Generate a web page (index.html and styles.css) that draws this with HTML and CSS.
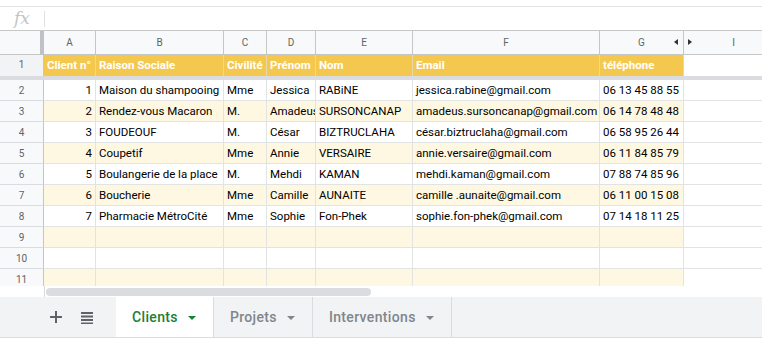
FILE: index.html
```html
<!DOCTYPE html>
<html lang="fr">
<head>
  <meta charset="UTF-8" />
  <title>Clients</title>
  <link rel="stylesheet" href="styles.css">
</head>
<body>
  <div class="app">
    <div class="formula-bar">
      <span class="fx">fx</span>
      <span class="fx-sep"></span>
    </div>

    <div class="sheet">
      <div class="row col-head">
        <div class="corner"></div>
        <div>A</div><div>B</div><div>C</div><div>D</div><div>E</div><div>F</div>
        <div class="hide-left">G</div>
        <div class="hide-right">I</div>
      </div>

      <div class="row head-row">
        <div class="rn rn-frozen">1</div>
        <div>Client n°</div>
        <div>Raison Sociale</div>
        <div>Civilité</div>
        <div>Prénom</div>
        <div>Nom</div>
        <div>Email</div>
        <div>téléphone</div>
        <div class="blank"></div>
      </div>

      <div class="freeze"></div>

      <div class="body">
        <div class="row">
          <div class="rn">2</div><div class="num">1</div><div>Maison du shampooing</div><div>Mme</div><div>Jessica</div><div>RABiNE</div><div>jessica.rabine@gmail.com</div><div>06 13 45 88 55</div><div class="blank"></div>
        </div>
        <div class="row band">
          <div class="rn">3</div><div class="num">2</div><div>Rendez-vous Macaron</div><div>M.</div><div>Amadeus</div><div>SURSONCANAP</div><div>amadeus.sursoncanap@gmail.com</div><div>06 14 78 48 48</div><div class="blank"></div>
        </div>
        <div class="row">
          <div class="rn">4</div><div class="num">3</div><div>FOUDEOUF</div><div>M.</div><div>César</div><div>BIZTRUCLAHA</div><div>césar.biztruclaha@gmail.com</div><div>06 58 95 26 44</div><div class="blank"></div>
        </div>
        <div class="row band">
          <div class="rn">5</div><div class="num">4</div><div>Coupetif</div><div>Mme</div><div>Annie</div><div>VERSAIRE</div><div>annie.versaire@gmail.com</div><div>06 11 84 85 79</div><div class="blank"></div>
        </div>
        <div class="row">
          <div class="rn">6</div><div class="num">5</div><div>Boulangerie de la place</div><div>M.</div><div>Mehdi</div><div>KAMAN</div><div>mehdi.kaman@gmail.com</div><div>07 88 74 85 96</div><div class="blank"></div>
        </div>
        <div class="row band">
          <div class="rn">7</div><div class="num">6</div><div>Boucherie</div><div>Mme</div><div>Camille</div><div>AUNAITE</div><div>camille .aunaite@gmail.com</div><div>06 11 00 15 08</div><div class="blank"></div>
        </div>
        <div class="row">
          <div class="rn">8</div><div class="num">7</div><div>Pharmacie MétroCité</div><div>Mme</div><div>Sophie</div><div>Fon-Phek</div><div>sophie.fon-phek@gmail.com</div><div>07 14 18 11 25</div><div class="blank"></div>
        </div>
        <div class="row band">
          <div class="rn">9</div><div></div><div></div><div></div><div></div><div></div><div></div><div></div><div class="blank"></div>
        </div>
        <div class="row">
          <div class="rn">10</div><div></div><div></div><div></div><div></div><div></div><div></div><div></div><div class="blank"></div>
        </div>
        <div class="row band">
          <div class="rn">11</div><div></div><div></div><div></div><div></div><div></div><div></div><div></div><div class="blank"></div>
        </div>
      </div>

      <div class="scroll">
        <div class="scroll-gutter"></div>
        <div class="scroll-thumb"></div>
      </div>
    </div>

    <div class="tabs">
      <div class="tab-tools">
        <svg class="tool" width="14" height="14" viewBox="0 0 14 14">
          <path d="M6 1h2v5h5v2H8v5H6V8H1V6h5z" fill="#5f6368"/>
        </svg>
        <svg class="tool" width="14" height="14" viewBox="0 0 14 14">
          <path d="M1 2h12v2H1zM1 5.5h12v2H1zM1 9h12v2H1zM1 12.5h12v1.5H1z" fill="#5f6368"/>
        </svg>
      </div>
      <div class="tab active">Clients <span class="caret"></span></div>
      <div class="tab">Projets <span class="caret"></span></div>
      <div class="tab">Interventions <span class="caret"></span></div>
    </div>
  </div>
</body>
</html>
```

FILE: styles.css
```css
body {
  margin: 0;
  font-family: Roboto, Arial, sans-serif;
  background: #fff;
  color: #000;
}

.app {
  width: 762px;
  height: 340px;
  overflow: hidden;
}

/* formula bar */
.formula-bar {
  margin-top: 6px;
  height: 23px;
  border-top: 1px solid #e2e3e3;
  border-bottom: 1px solid #c4c7c5;
  display: flex;
  align-items: center;
}

.fx {
  width: 44px;
  text-align: center;
  font-family: "DejaVu Serif", serif;
  font-style: italic;
  font-size: 17px;
  color: #c4c4c4;
  margin-top: -2px;
}

.fx-sep {
  width: 1px;
  height: 16px;
  background: #e0e0e0;
}

/* grid */
.row {
  display: grid;
  grid-template-columns: 44px 52px 128px 43px 49px 97px 187px 84px 100px;
  height: 21px;
}

.row > div {
  box-sizing: border-box;
  border-right: 1px solid #e2e3e3;
  border-bottom: 1px solid #e2e3e3;
  padding: 0 3px;
  font-size: 11.5px;
  line-height: 21px;
  white-space: nowrap;
  overflow: hidden;
}

.col-head {
  height: 23px;
}

.col-head > div {
  background: #f8f9fa;
  color: #5f6368;
  font-size: 10px;
  line-height: 23px;
  text-align: center;
  border-right-color: #c4c7c5;
  border-bottom-color: #c4c7c5;
  position: relative;
  overflow: visible;
}

.col-head > .corner {
  border-right: 4px solid #bfc1c4;
}

.hide-left::after {
  content: "";
  position: absolute;
  right: 5px;
  top: 8px;
  border: 3.5px solid transparent;
  border-right: 4px solid #333;
  border-left: 0;
}

.hide-right::before {
  content: "";
  position: absolute;
  left: 4px;
  top: 8px;
  border: 3.5px solid transparent;
  border-left: 4px solid #333;
  border-right: 0;
}

.head-row {
  height: 22px;
}

.head-row > div {
  background: #f4c84f;
  color: #fff;
  font-weight: bold;
  line-height: 22px;
  border-right-color: #e9d9a6;
  border-bottom: 0;
}

.head-row > .rn,
.head-row > .blank {
  font-weight: normal;
}

.rn {
  text-align: center;
  color: #5f6368;
  font-size: 10px !important;
}

.row > .rn {
  background: #f8f9fa;
  border-right-color: #c4c7c5;
  border-bottom-color: #dadce0;
  padding: 0;
}

.head-row > .rn {
  background: #f1f3f4;
  color: #5f6368;
}

.head-row > .blank {
  background: #fff;
  border-right: 0;
}

.freeze {
  height: 4px;
  background: #dadce0;
}

.body {
  height: 206px;
  overflow: hidden;
}

.band > div {
  background: #fef8e3;
}

.band > .blank {
  background: #fff;
}

.num {
  text-align: right;
}

/* horizontal scrollbar */
.scroll {
  height: 11px;
  display: flex;
  align-items: center;
}

.scroll-gutter {
  width: 45px;
  height: 100%;
  box-sizing: border-box;
  border-right: 1px solid #dadce0;
}

.scroll-thumb {
  width: 325px;
  height: 8px;
  margin-left: 1px;
  border-radius: 4px;
  background: #dadce0;
}

/* sheet tabs */
.tabs {
  height: 40px;
  background: #f1f3f4;
  border-bottom: 1px solid #dadce0;
  display: flex;
}

.tab-tools {
  width: 116px;
  display: flex;
  align-items: center;
  justify-content: flex-end;
  gap: 17px;
  padding-right: 22px;
  box-sizing: border-box;
}

.tool {
  display: block;
}

.tab {
  display: flex;
  align-items: center;
  gap: 10px;
  padding: 0 17px 0 16px;
  border-right: 1px solid #dadce0;
  font-size: 14px;
  font-weight: 500;
  letter-spacing: 0.35px;
  color: #80868b;
}

.tab.active {
  background: #fff;
  color: #188038;
}

.caret {
  border: 4px solid transparent;
  border-top: 4px solid currentColor;
  border-bottom: 0;
  width: 0;
  height: 0;
  margin-top: 1px;
}
```
